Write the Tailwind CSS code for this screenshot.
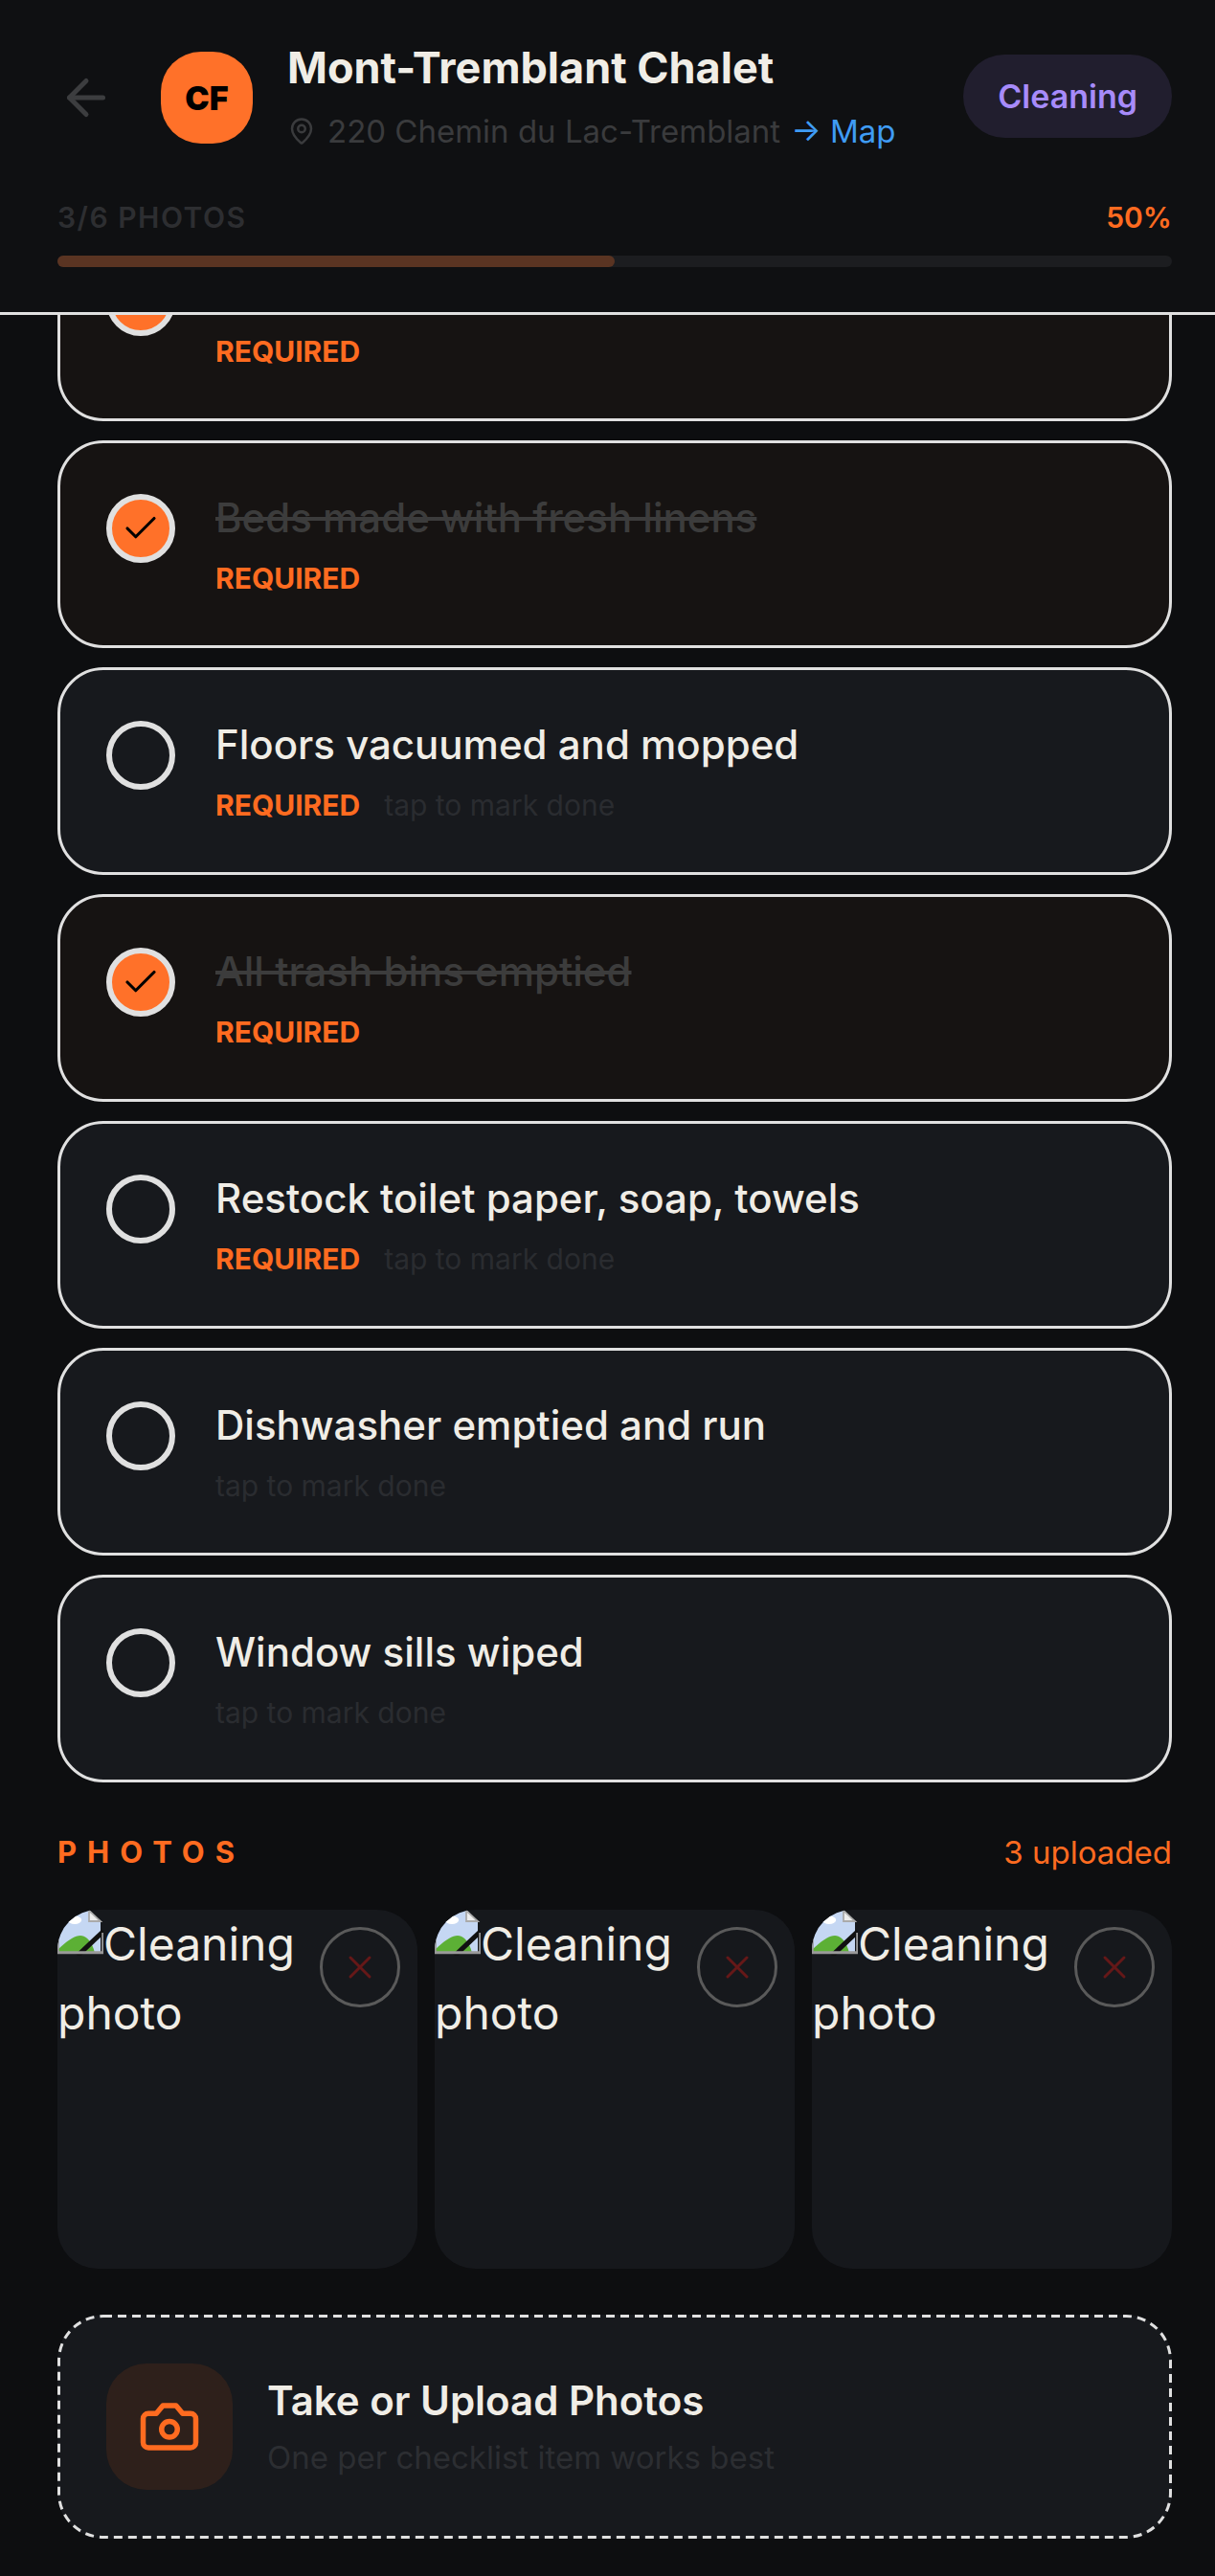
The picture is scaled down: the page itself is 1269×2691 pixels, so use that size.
<!DOCTYPE html>
<html lang="en">
  <head>
    <meta charset="UTF-8" />
    <meta name="viewport" content="width=device-width, initial-scale=1.0" />
    <title>Mont-Tremblant Chalet - Cleaning</title>
    <script src="https://cdn.jsdelivr.net/npm/@tailwindcss/browser@4"></script>
  </head>

  <body class="bg-[#0d0e10] font-['Inter',sans-serif] text-[#f0ede6]">
    <div class="h-[2691px] overflow-hidden">
      <!-- Header sits over the scrolled list -->
      <header class="sticky top-0 z-10 h-[329px] border-b-[3px] border-[#e0e0e0] bg-[#0f1012] pl-[60px] pr-[45px] pt-[54px]">
        <div class="flex items-start">
          <svg class="mt-[18px] w-[60px] h-[60px] text-[#3c3d3f]" viewBox="0 0 24 24" fill="none" stroke="currentColor" stroke-width="2" stroke-linecap="round" stroke-linejoin="round">
            <path d="M19 12H5" />
            <path d="m12 19-7-7 7-7" />
          </svg>
          <div class="ml-[48px] flex w-[96px] h-[96px] items-center justify-center rounded-[42px] bg-[#ff7129] text-[34px] font-black text-black">CF</div>
          <div class="ml-[36px] flex-1">
            <h1 class="text-[45px] leading-[50px] font-bold text-[#f0ede6] -mt-[8px]">Mont-Tremblant Chalet</h1>
            <div class="mt-[19px] flex items-center text-[33px] leading-[44px] text-[#3a3b3d]">
              <svg class="w-[30px] h-[30px]" viewBox="0 0 24 24" fill="none" stroke="currentColor" stroke-width="2" stroke-linecap="round" stroke-linejoin="round">
                <path d="M20 10c0 4.993-5.539 10.193-7.399 11.799a1 1 0 0 1-1.202 0C9.539 20.193 4 14.993 4 10a8 8 0 0 1 16 0" />
                <circle cx="12" cy="10" r="3" />
              </svg>
              <span class="ml-[12px]">220 Chemin du Lac-Tremblant</span>
              <span class="ml-[11px] text-[#3f9cf5]">→ Map</span>
            </div>
          </div>
          <span class="mt-[3px] rounded-full bg-[#211e2e] px-[36px] py-[20px] text-[34px] leading-[47px] font-semibold text-[#a78bfa]">Cleaning</span>
        </div>
        <div class="mt-[50px] flex items-center justify-between text-[30px] leading-[36px] font-semibold">
          <span class="tracking-[1.5px] text-[#2d2e31]">3/6 PHOTOS</span>
          <span class="text-[#ff6b20]">50%</span>
        </div>
        <div class="mt-[22px] h-[12px] rounded-full bg-[#1c1d20]">
          <div class="h-full w-1/2 rounded-full bg-[#5a3422]"></div>
        </div>
      </header>

      <main class="-mt-[106px] pl-[60px] pr-[45px]">
        <ul class="flex flex-col gap-[20px]">
          <li class="flex h-[217px] gap-[42px] rounded-[48px] border-[3px] border-[#e0e0e0] bg-[#161312] pt-[51px] pl-[48px]">
            <span class="mt-[2px] flex w-[72px] h-[72px] shrink-0 items-center justify-center rounded-full border-[6px] border-[#e0e0e0] bg-[#ff7129]">
              <svg class="w-[42px] h-[42px]" viewBox="0 0 24 24" fill="none" stroke="black" stroke-width="1.8" stroke-linecap="round" stroke-linejoin="round"><path d="M20 6 9 17l-5-5" /></svg>
            </span>
            <div>
              <p class="text-[42px] leading-[54px] font-medium text-[#3c3c3c] line-through">Linens changed</p>
              <p class="mt-[16px] text-[30px] leading-[40px] font-bold text-[#ff6b20]">REQUIRED</p>
            </div>
          </li>
          <li class="flex h-[217px] gap-[42px] rounded-[48px] border-[3px] border-[#e0e0e0] bg-[#161312] pt-[51px] pl-[48px]">
            <span class="mt-[2px] flex w-[72px] h-[72px] shrink-0 items-center justify-center rounded-full border-[6px] border-[#e0e0e0] bg-[#ff7129]">
              <svg class="w-[42px] h-[42px]" viewBox="0 0 24 24" fill="none" stroke="black" stroke-width="1.8" stroke-linecap="round" stroke-linejoin="round"><path d="M20 6 9 17l-5-5" /></svg>
            </span>
            <div>
              <p class="text-[42px] leading-[54px] font-medium text-[#3c3c3c] line-through">Beds made with fresh linens</p>
              <p class="mt-[16px] text-[30px] leading-[40px] font-bold text-[#ff6b20]">REQUIRED</p>
            </div>
          </li>
          <li class="flex h-[217px] gap-[42px] rounded-[48px] border-[3px] border-[#e0e0e0] bg-[#17191d] pt-[51px] pl-[48px]">
            <span class="mt-[2px] w-[72px] h-[72px] shrink-0 rounded-full border-[6px] border-[#e0e0e0]"></span>
            <div>
              <p class="text-[42px] leading-[54px] font-medium">Floors vacuumed and mopped</p>
              <p class="mt-[16px] flex gap-[25px] text-[30px] leading-[40px]"><span class="font-bold text-[#ff6b20]">REQUIRED</span><span class="text-[#2a2c30]">tap to mark done</span></p>
            </div>
          </li>
          <li class="flex h-[217px] gap-[42px] rounded-[48px] border-[3px] border-[#e0e0e0] bg-[#161312] pt-[51px] pl-[48px]">
            <span class="mt-[2px] flex w-[72px] h-[72px] shrink-0 items-center justify-center rounded-full border-[6px] border-[#e0e0e0] bg-[#ff7129]">
              <svg class="w-[42px] h-[42px]" viewBox="0 0 24 24" fill="none" stroke="black" stroke-width="1.8" stroke-linecap="round" stroke-linejoin="round"><path d="M20 6 9 17l-5-5" /></svg>
            </span>
            <div>
              <p class="text-[42px] leading-[54px] font-medium text-[#3c3c3c] line-through">All trash bins emptied</p>
              <p class="mt-[16px] text-[30px] leading-[40px] font-bold text-[#ff6b20]">REQUIRED</p>
            </div>
          </li>
          <li class="flex h-[217px] gap-[42px] rounded-[48px] border-[3px] border-[#e0e0e0] bg-[#17191d] pt-[51px] pl-[48px]">
            <span class="mt-[2px] w-[72px] h-[72px] shrink-0 rounded-full border-[6px] border-[#e0e0e0]"></span>
            <div>
              <p class="text-[42px] leading-[54px] font-medium">Restock toilet paper, soap, towels</p>
              <p class="mt-[16px] flex gap-[25px] text-[30px] leading-[40px]"><span class="font-bold text-[#ff6b20]">REQUIRED</span><span class="text-[#2a2c30]">tap to mark done</span></p>
            </div>
          </li>
          <li class="flex h-[217px] gap-[42px] rounded-[48px] border-[3px] border-[#e0e0e0] bg-[#17191d] pt-[51px] pl-[48px]">
            <span class="mt-[2px] w-[72px] h-[72px] shrink-0 rounded-full border-[6px] border-[#e0e0e0]"></span>
            <div>
              <p class="text-[42px] leading-[54px] font-medium">Dishwasher emptied and run</p>
              <p class="mt-[16px] text-[30px] leading-[40px] text-[#2a2c30]">tap to mark done</p>
            </div>
          </li>
          <li class="flex h-[217px] gap-[42px] rounded-[48px] border-[3px] border-[#e0e0e0] bg-[#17191d] pt-[51px] pl-[48px]">
            <span class="mt-[2px] w-[72px] h-[72px] shrink-0 rounded-full border-[6px] border-[#e0e0e0]"></span>
            <div>
              <p class="text-[42px] leading-[54px] font-medium">Window sills wiped</p>
              <p class="mt-[16px] text-[30px] leading-[40px] text-[#2a2c30]">tap to mark done</p>
            </div>
          </li>
        </ul>

        <!-- Photos -->
        <div class="mt-[53px] flex items-center justify-between text-[#ff6b20]">
          <h2 class="text-[31px] leading-[40px] font-bold tracking-[11px]">PHOTOS</h2>
          <span class="text-[33px] leading-[40px]">3 uploaded</span>
        </div>
        <div class="mt-[40px] grid grid-cols-3 gap-[18px]">
          <div class="relative h-[375px] overflow-hidden rounded-[42px] bg-[#16181c] text-[48px] leading-[72px]">
            <svg class="inline-block w-[48px] h-[48px] align-[5px]" viewBox="0 0 16 16">
              <path fill="#c5d7f3" d="M0 0H11L15 4V15H0Z" />
              <ellipse fill="#fff" cx="6" cy="3.6" rx="2.4" ry="1.4" />
              <path fill="#5cb035" d="M0 15V14C3 11 6 9 8 9C10 9 12 11 13 15Z" />
              <path fill="none" stroke="#111" stroke-width="1.7" d="M7 16 16 7.5" />
              <path fill="#eee" stroke="#aaa" stroke-width=".6" d="M11 .3V4H15Z" />
              <path fill="#999" d="M0 14.4H16V15.4H0ZM0 0H.6V15H0ZM15.4 8H16V15H15.4Z" />
            </svg>Cleaning photo
            <button class="absolute top-[18px] right-[18px] flex w-[84px] h-[84px] items-center justify-center rounded-full border-[3px] border-[#5a5a5a]">
              <svg class="w-[40px] h-[40px]" viewBox="0 0 24 24" fill="none" stroke="#651818" stroke-width="1.8" stroke-linecap="round" stroke-linejoin="round"><path d="M18 6 6 18" /><path d="m6 6 12 12" /></svg>
            </button>
          </div>
          <div class="relative h-[375px] overflow-hidden rounded-[42px] bg-[#16181c] text-[48px] leading-[72px]">
            <svg class="inline-block w-[48px] h-[48px] align-[5px]" viewBox="0 0 16 16">
              <path fill="#c5d7f3" d="M0 0H11L15 4V15H0Z" />
              <ellipse fill="#fff" cx="6" cy="3.6" rx="2.4" ry="1.4" />
              <path fill="#5cb035" d="M0 15V14C3 11 6 9 8 9C10 9 12 11 13 15Z" />
              <path fill="none" stroke="#111" stroke-width="1.7" d="M7 16 16 7.5" />
              <path fill="#eee" stroke="#aaa" stroke-width=".6" d="M11 .3V4H15Z" />
              <path fill="#999" d="M0 14.4H16V15.4H0ZM0 0H.6V15H0ZM15.4 8H16V15H15.4Z" />
            </svg>Cleaning photo
            <button class="absolute top-[18px] right-[18px] flex w-[84px] h-[84px] items-center justify-center rounded-full border-[3px] border-[#5a5a5a]">
              <svg class="w-[40px] h-[40px]" viewBox="0 0 24 24" fill="none" stroke="#651818" stroke-width="1.8" stroke-linecap="round" stroke-linejoin="round"><path d="M18 6 6 18" /><path d="m6 6 12 12" /></svg>
            </button>
          </div>
          <div class="relative h-[375px] overflow-hidden rounded-[42px] bg-[#16181c] text-[48px] leading-[72px]">
            <svg class="inline-block w-[48px] h-[48px] align-[5px]" viewBox="0 0 16 16">
              <path fill="#c5d7f3" d="M0 0H11L15 4V15H0Z" />
              <ellipse fill="#fff" cx="6" cy="3.6" rx="2.4" ry="1.4" />
              <path fill="#5cb035" d="M0 15V14C3 11 6 9 8 9C10 9 12 11 13 15Z" />
              <path fill="none" stroke="#111" stroke-width="1.7" d="M7 16 16 7.5" />
              <path fill="#eee" stroke="#aaa" stroke-width=".6" d="M11 .3V4H15Z" />
              <path fill="#999" d="M0 14.4H16V15.4H0ZM0 0H.6V15H0ZM15.4 8H16V15H15.4Z" />
            </svg>Cleaning photo
            <button class="absolute top-[18px] right-[18px] flex w-[84px] h-[84px] items-center justify-center rounded-full border-[3px] border-[#5a5a5a]">
              <svg class="w-[40px] h-[40px]" viewBox="0 0 24 24" fill="none" stroke="#651818" stroke-width="1.8" stroke-linecap="round" stroke-linejoin="round"><path d="M18 6 6 18" /><path d="m6 6 12 12" /></svg>
            </button>
          </div>
        </div>

        <!-- Upload -->
        <button class="relative mt-[48px] flex h-[234px] w-full items-center gap-[36px] rounded-[48px] bg-[#17191d] pl-[51px] text-left">
          <svg class="absolute inset-0 w-full h-full" fill="none" stroke="#e0e0e0" stroke-width="3" stroke-dasharray="9 6">
            <rect x="1.5" y="1.5" width="1161" height="231" rx="46.5" />
          </svg>
          <span class="flex w-[132px] h-[132px] items-center justify-center rounded-[42px] bg-[#2e201b]">
            <svg class="w-[66px] h-[66px]" viewBox="0 0 24 24" fill="none" stroke="#ff6b20" stroke-width="2" stroke-linecap="round" stroke-linejoin="round">
              <path d="M14.5 4h-5L7 7H4a2 2 0 0 0-2 2v9a2 2 0 0 0 2 2h16a2 2 0 0 0 2-2V9a2 2 0 0 0-2-2h-3z" />
              <circle cx="12" cy="13" r="3" />
            </svg>
          </span>
          <span>
            <span class="block text-[42px] leading-[54px] font-semibold -mt-[3px]">Take or Upload Photos</span>
            <span class="mt-[12px] block text-[33px] leading-[40px] text-[#2c2e32]">One per checklist item works best</span>
          </span>
        </button>
      </main>
    </div>
  </body>
</html>
